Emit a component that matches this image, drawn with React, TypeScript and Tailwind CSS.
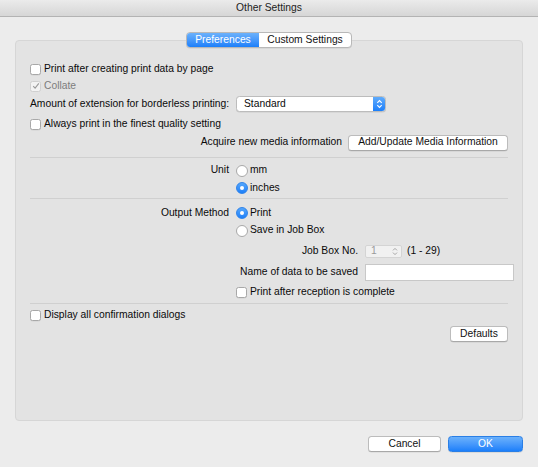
import React, { useState } from 'react';

const Checkbox: React.FC<{ checked?: boolean; disabled?: boolean }> = ({ checked, disabled }) => (
    <span
        className={`flex h-[11px] w-[11px] shrink-0 items-center justify-center rounded-[2.5px] border ${
            disabled ? 'border-[#d0d0d0] bg-[#f3f3f3]' : 'border-[#a8a8a8] bg-white shadow-[0_0.5px_0.5px_rgba(0,0,0,0.08)]'
        }`}
    >
        {checked && (
            <svg width="8" height="8" viewBox="0 0 8 8">
                <path d="M1.2 4.2 L3.1 6.1 L6.8 1.4" fill="none" stroke={disabled ? '#9a9a9a' : '#222'} strokeWidth="1.1" />
            </svg>
        )}
    </span>
);

const Radio: React.FC<{ on?: boolean }> = ({ on }) =>
    on ? (
        <span className="flex h-[12px] w-[12px] shrink-0 items-center justify-center rounded-full bg-gradient-to-b from-[#54a6fb] to-[#1b7ff9] border border-[#2f83ea]">
            <span className="h-[4px] w-[4px] rounded-full bg-white" />
        </span>
    ) : (
        <span className="h-[12px] w-[12px] shrink-0 rounded-full border border-[#a8a8a8] bg-white" />
    );

const Button: React.FC<{ children: React.ReactNode; className?: string }> = ({ children, className }) => (
    <button className={`flex h-[16px] shrink-0 items-center justify-center rounded-[3.5px] border border-[#bcbcbc] border-b-[#a8a8a8] bg-white text-[#111] shadow-[0_0.5px_0.5px_rgba(0,0,0,0.1)] ${className ?? ''}`}>
        {children}
    </button>
);

export default function App() {
    const [tab, setTab] = useState('prefs');

    return (
        <div className="flex h-[467px] w-[538px] flex-col overflow-hidden bg-[#ececec] font-['Liberation_Sans',Arial,sans-serif] text-[10.3px] leading-none text-[#0a0a0a]">
            {/* title bar */}
            <div className="flex h-[17px] shrink-0 items-center justify-center border-b border-[#b3b3b3] bg-gradient-to-b from-[#ebebeb] to-[#d6d6d6] pt-[1px] text-[#222]">
                Other Settings
            </div>

            {/* tabs */}
            <div className="relative z-10 mt-[15px] -mb-[8px] flex justify-center">
                <div className="flex h-[16px] overflow-hidden rounded-[4px] border border-[#b8b8b8] bg-white shadow-[0_0.5px_0.5px_rgba(0,0,0,0.1)]">
                    <button
                        onClick={() => setTab('prefs')}
                        className={`flex w-[72px] items-center justify-center ${tab === 'prefs' ? 'bg-gradient-to-b from-[#6bb1fb] to-[#1a7ffa] text-white' : 'text-[#111]'}`}
                    >
                        Preferences
                    </button>
                    <button
                        onClick={() => setTab('custom')}
                        className={`flex w-[92px] items-center justify-center ${tab === 'custom' ? 'bg-gradient-to-b from-[#6bb1fb] to-[#1a7ffa] text-white' : 'text-[#111]'}`}
                    >
                        Custom Settings
                    </button>
                </div>
            </div>

            {/* group box */}
            <div className="mx-[15px] flex h-[381px] flex-col rounded-[4px] border border-[#d6d6d6] bg-[#e3e3e3] px-[14px] pt-[19px]">
                <div className="flex h-[18px] items-center gap-[3px]">
                    <Checkbox />
                    <span>Print after creating print data by page</span>
                </div>
                <div className="flex h-[16px] items-center gap-[3px]">
                    <Checkbox checked disabled />
                    <span className="text-[#7d7d7d]">Collate</span>
                </div>
                <div className="flex h-[20px] items-center">
                    <span className="w-[206px] shrink-0">Amount of extension for borderless printing:</span>
                    <div className="flex h-[16px] w-[150px] items-center justify-between rounded-[3.5px] border border-[#bcbcbc] bg-white pl-[7px] shadow-[0_0.5px_0.5px_rgba(0,0,0,0.1)]">
                        <span>Standard</span>
                        <span className="flex h-full w-[12px] items-center justify-center rounded-r-[3px] bg-gradient-to-b from-[#5fabfb] to-[#1a7ffa]">
                            <svg width="7" height="10" viewBox="0 0 7 10">
                                <path d="M1.3 3.8 L3.5 1.6 L5.7 3.8 M1.3 6.2 L3.5 8.4 L5.7 6.2" fill="none" stroke="#fff" strokeWidth="1.1" />
                            </svg>
                        </span>
                    </div>
                </div>
                <div className="flex h-[20px] items-center gap-[3px]">
                    <Checkbox />
                    <span>Always print in the finest quality setting</span>
                </div>
                <div className="flex h-[17px] items-center justify-end gap-[6px]">
                    <span>Acquire new media information</span>
                    <Button className="w-[160px]">Add/Update Media Information</Button>
                </div>

                <div className="mt-[6px] mb-[4px] border-t border-[#d0d0d0]" />

                <div className="flex h-[17px] items-center">
                    <span className="w-[200px] shrink-0 pr-[1px] text-right">Unit</span>
                    <span className="ml-[6px] flex items-center gap-[2px]">
                        <Radio />
                        <span>mm</span>
                    </span>
                </div>
                <div className="flex h-[18px] items-center pl-[206px]">
                    <span className="flex items-center gap-[2px]">
                        <Radio on />
                        <span>inches</span>
                    </span>
                </div>

                <div className="mt-[1px] mb-[5px] border-t border-[#d0d0d0]" />

                <div className="flex h-[18px] items-center">
                    <span className="w-[200px] shrink-0 pr-[1px] text-right">Output Method</span>
                    <span className="ml-[6px] flex items-center gap-[2px]">
                        <Radio on />
                        <span>Print</span>
                    </span>
                </div>
                <div className="flex h-[17px] items-center pl-[206px]">
                    <span className="flex items-center gap-[2px]">
                        <Radio />
                        <span>Save in Job Box</span>
                    </span>
                </div>
                <div className="flex h-[24px] items-center">
                    <span className="w-[328px] shrink-0 text-right">Job Box No.</span>
                    <div className="ml-[7px] flex h-[13px] w-[37px] shrink-0 items-center justify-between rounded-[2px] border border-[#d4d4d4] bg-[#f1f1f1] pl-[5px] pr-[3px] text-[#9a9a9a]">
                        <span>1</span>
                        <svg width="6" height="9" viewBox="0 0 6 9">
                            <path d="M1 3.4 L3 1.4 L5 3.4 M1 5.6 L3 7.6 L5 5.6" fill="none" stroke="#a5a5a5" strokeWidth="1" />
                        </svg>
                    </div>
                    <span className="ml-[5px] shrink-0">(1 - 29)</span>
                </div>
                <div className="flex h-[18px] items-center">
                    <span className="w-[328px] shrink-0 text-right">Name of data to be saved</span>
                    <div className="ml-[7px] h-[17px] w-[149px] shrink-0 border border-[#c8c8c8] bg-white" />
                </div>
                <div className="flex h-[22px] items-center gap-[3px] pl-[206px]">
                    <Checkbox />
                    <span>Print after reception is complete</span>
                </div>

                <div className="border-t border-[#d0d0d0]" />

                <div className="flex h-[22px] items-center gap-[3px]">
                    <Checkbox />
                    <span>Display all confirmation dialogs</span>
                </div>
                <div className="flex justify-end">
                    <Button className="w-[58px]">Defaults</Button>
                </div>
            </div>

            {/* footer */}
            <div className="mt-[15px] flex justify-end gap-[7px] pr-[15px]">
                <Button className="w-[73px]">Cancel</Button>
                <button className="flex h-[16px] w-[75px] items-center justify-center rounded-[3.5px] border border-[#2a7fe6] bg-gradient-to-b from-[#6bb1fb] to-[#1a7ffa] text-white shadow-[0_0.5px_0.5px_rgba(0,0,0,0.15)]">
                    OK
                </button>
            </div>
        </div>
    );
}
